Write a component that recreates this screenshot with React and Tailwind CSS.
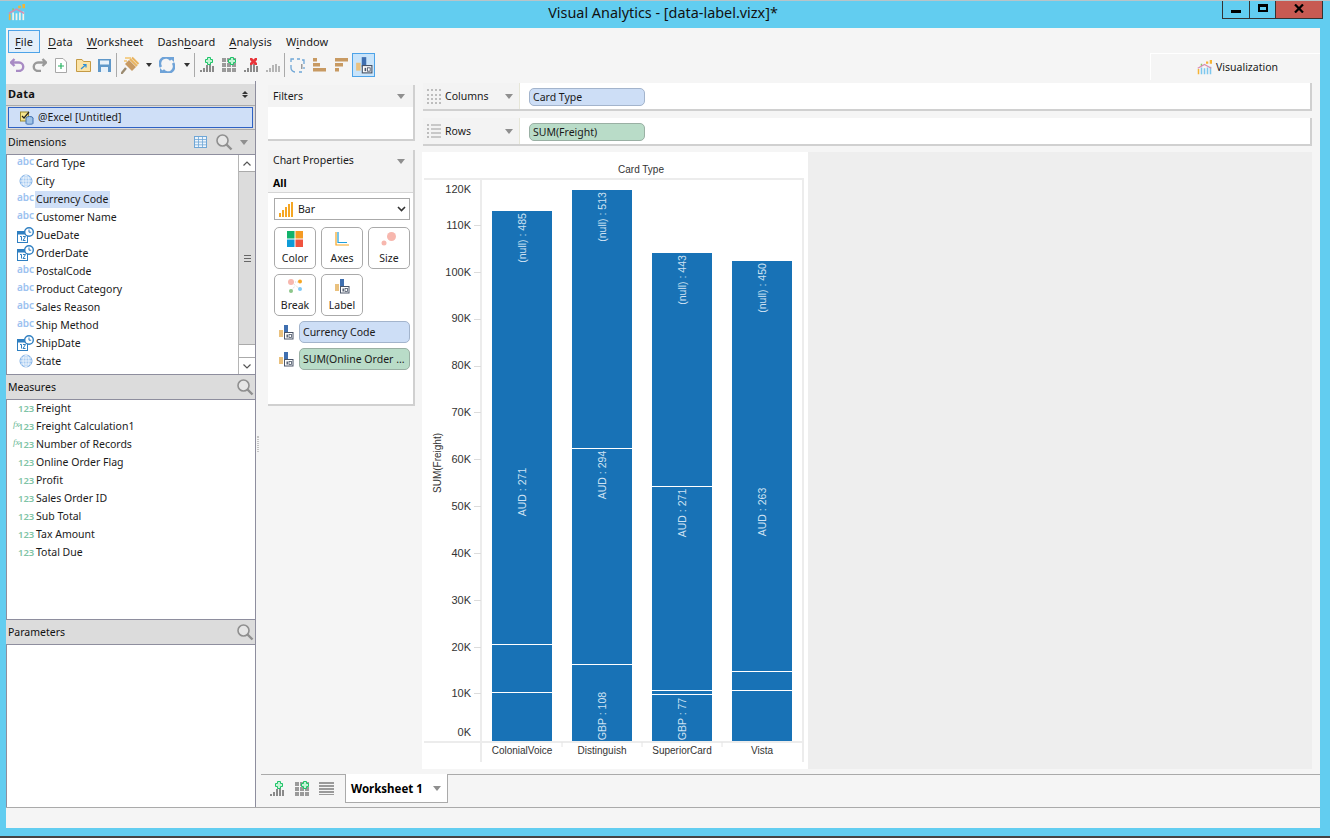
import React from "react";

const UI = "font-['Noto_Sans',sans-serif]";

const DIMENSIONS = [
  { name: "Card Type", type: "abc" },
  { name: "City", type: "geo" },
  { name: "Currency Code", type: "abc", selected: true },
  { name: "Customer Name", type: "abc" },
  { name: "DueDate", type: "date" },
  { name: "OrderDate", type: "date" },
  { name: "PostalCode", type: "abc" },
  { name: "Product Category", type: "abc" },
  { name: "Sales Reason", type: "abc" },
  { name: "Ship Method", type: "abc" },
  { name: "ShipDate", type: "date" },
  { name: "State", type: "geo" },
];

const MEASURES = [
  { name: "Freight" },
  { name: "Freight Calculation1", calc: true },
  { name: "Number of Records", calc: true },
  { name: "Online Order Flag" },
  { name: "Profit" },
  { name: "Sales Order ID" },
  { name: "Sub Total" },
  { name: "Tax Amount" },
  { name: "Total Due" },
];

const MENU = [
  { pre: "", key: "F", post: "ile" },
  { pre: "", key: "D", post: "ata" },
  { pre: "", key: "W", post: "orksheet" },
  { pre: "Dash", key: "b", post: "oard" },
  { pre: "", key: "A", post: "nalysis" },
  { pre: "W", key: "i", post: "ndow" },
];

const BARS = [
  { x: 492, top: 211, name: "ColonialVoice", lines: [644, 692], labels: [["(null) : 485", 238], ["AUD : 271", 492]] },
  { x: 572, top: 190, name: "Distinguish", lines: [448, 664], labels: [["(null) : 513", 217], ["AUD : 294", 475], ["GBP : 108", 716]] },
  { x: 652, top: 253, name: "SuperiorCard", lines: [486, 690, 694], labels: [["(null) : 443", 280], ["AUD : 271", 513], ["GBP : 77", 719]] },
  { x: 732, top: 261, name: "Vista", lines: [671, 690], labels: [["(null) : 450", 288], ["AUD : 263", 512]] },
];

const TICKS = [
  ["120K", 178, 193],
  ["110K", 225, 229],
  ["100K", 272, 276],
  ["90K", 319, 322],
  ["80K", 366, 369],
  ["70K", 412, 416],
  ["60K", 459, 463],
  ["50K", 506, 510],
  ["40K", 553, 557],
  ["30K", 600, 604],
  ["20K", 647, 651],
  ["10K", 693, 697],
  ["0K", 740, 736],
];

function AppLogo({ className, bar = "#7cc7ee" }) {
  return (
    <svg viewBox="0 0 20 20" className={className}>
      <rect x="1" y="12" width="2" height="7" fill="#f5b335" />
      <rect x="5" y="10" width="2" height="9" fill={bar} />
      <rect x="9" y="11" width="2" height="8" fill={bar} />
      <rect x="13" y="10" width="2" height="9" fill={bar} />
      <rect x="17" y="9" width="2" height="10" fill={bar} />
      <rect x="5" y="5" width="2" height="3" fill="#8fc66f" />
      <rect x="12" y="2" width="3" height="3" fill="#f5b335" />
      <rect x="17" y="0" width="3" height="5" fill="#f5b335" />
      <path d="M1 11 L10 6 L19 11" fill="none" stroke="#d98bb0" strokeWidth="1.6" />
    </svg>
  );
}

function Plus({ x = 7, y = 0, color = "#1fc468" }) {
  return <path d={`M${x + 2.5} ${y + 0.5} h3 v2 h2 v3 h-2 v2 h-3 v-2 h-2 v-3 h2 z`} fill="#c4f3d6" stroke={color} strokeWidth="1" />;
}

function BarsIcon({ badge, gray }) {
  const c = gray ? "#b5b5b5" : "#8a8a8a";
  return (
    <svg viewBox="0 0 16 16" className="w-4 h-4 shrink-0">
      <rect x="1" y="13" width="2" height="2" fill={c} />
      <rect x="4" y="11" width="2" height="4" fill={c} />
      <rect x="7" y="8" width="2" height="7" fill={c} />
      <rect x="10" y="7" width="2" height="8" fill={c} />
      <rect x="13" y="9" width="2" height="6" fill={c} />
      {badge === "plus" && <Plus x={6} y={0} />}
      {badge === "x" && <path d="M7 1 l2 0 l1.5 1.5 l1.5 -1.5 l2 0 l0 2 l-1.5 1.5 l1.5 1.5 l0 2 l-2 0 l-1.5 -1.5 l-1.5 1.5 l-2 0 l0 -2 l1.5 -1.5 l-1.5 -1.5 z" fill="#e8353a" />}
    </svg>
  );
}

function GridPlus() {
  return (
    <svg viewBox="0 0 16 16" className="w-4 h-4 shrink-0">
      {[1, 6, 11].map(y => [1, 6, 11].map(x => <rect key={`${x}-${y}`} x={x} y={y} width="4" height="4" fill="#9a9a9a" />))}
      <Plus x={7} y={0} />
    </svg>
  );
}

function LinesIcon() {
  return (
    <svg viewBox="0 0 15 13" className="w-[15px] h-[13px] shrink-0">
      {[0, 3, 6, 9].map(y => <rect key={y} x="0" y={y} width="15" height="2" fill="#9a9a9a" />)}
      <rect x="0" y="12" width="15" height="1" fill="#9a9a9a" />
    </svg>
  );
}

function LabelIcon({ className = "w-4 h-4" }) {
  return (
    <svg viewBox="0 0 16 16" className={`${className} shrink-0`}>
      <rect x="1" y="6" width="4" height="7" fill="#eac17e" />
      <rect x="6" y="1" width="4" height="9" fill="#3f6fb0" />
      <rect x="6.5" y="8.5" width="8.5" height="6.5" fill="#fff" stroke="#4a5568" />
      <rect x="8.5" y="10.5" width="1.4" height="3" fill="#4a5568" />
      <rect x="11" y="10.5" width="2.5" height="3" fill="none" stroke="#4a5568" strokeWidth="0.8" />
    </svg>
  );
}

function Caret({ className = "" }) {
  return <div className={`w-0 h-0 border-x-[4px] border-x-transparent border-t-[5px] border-t-[#8f8f8f] ${className}`} />;
}

function SmallCaret() {
  return <div className="w-0 h-0 border-x-[3px] border-x-transparent border-t-[4px] border-t-[#333]" />;
}

function Search() {
  return (
    <svg viewBox="0 0 18 18" className="w-[18px] h-[18px] shrink-0">
      <circle cx="7.5" cy="7.5" r="5.5" fill="#fff" fillOpacity="0.3" stroke="#8f8f8f" strokeWidth="1.6" />
      <path d="M11.5 11.5 L16.5 16.5" stroke="#8f8f8f" strokeWidth="2.4" />
    </svg>
  );
}

function TypeIcon({ type }) {
  if (type === "abc") {
    return <span className="w-[17px] text-[10px] leading-none font-['Noto_Sans',sans-serif] font-semibold text-[#9cc2f0] -translate-y-[2px]">abc</span>;
  }
  if (type === "geo") {
    return (
      <svg viewBox="0 0 14 14" className="w-[14px] h-[14px] ml-[2px] mr-[1px]">
        <circle cx="7" cy="7" r="6" fill="#a9ccf2" stroke="#7fb0e6" />
        <path d="M1 7h12M2 4h10M2 10h10M7 1v12" stroke="#fff" strokeWidth="0.7" />
        <ellipse cx="7" cy="7" rx="3" ry="6" fill="none" stroke="#fff" strokeWidth="0.7" />
      </svg>
    );
  }
  return (
    <svg viewBox="0 0 17 16" className="w-[17px] h-4">
      <rect x="0.5" y="4.5" width="10" height="11" fill="#fff" stroke="#2f7fc1" />
      <rect x="0.5" y="4.5" width="10" height="3" fill="#2f7fc1" />
      <path d="M3 9.5h1.5v4M6 9.5h2.5l-2.5 4h2.5" fill="none" stroke="#2f7fc1" />
      <circle cx="12" cy="5" r="4.3" fill="#fff" stroke="#2f7fc1" strokeWidth="1.4" />
      <path d="M12 2.5v2.7h2.2" fill="none" stroke="#2f7fc1" />
    </svg>
  );
}

function PanelHeader({ title, children }) {
  return (
    <div className="h-[24px] bg-[#dcdcdc] flex items-center pl-[2px] pr-[1px] text-[#111]">
      <span className="flex-1">{title}</span>
      {children}
    </div>
  );
}

function Scrollbar() {
  return (
    <div className="w-[17px] shrink-0 border-l border-[#b5b5b5] flex flex-col bg-white">
      <div className="h-[17px] border-b border-[#aaa] flex items-center justify-center">
        <svg viewBox="0 0 8 5" className="w-2 h-[5px]"><path d="M0.5 4.5 L4 1 L7.5 4.5" fill="none" stroke="#555" strokeWidth="1.2" /></svg>
      </div>
      <div className="h-[173px] bg-[#dcdcdc] border-b border-[#aaa] flex items-center justify-center">
        <div className="w-[7px] h-[7px] border-y-[1px] border-[#666] flex items-center"><div className="w-full h-px bg-[#666]" /></div>
      </div>
      <div className="flex-1" />
      <div className="h-[17px] border-t border-[#aaa] flex items-center justify-center">
        <svg viewBox="0 0 8 5" className="w-2 h-[5px]"><path d="M0.5 0.5 L4 4 L7.5 0.5" fill="none" stroke="#555" strokeWidth="1.2" /></svg>
      </div>
    </div>
  );
}

function Sidebar() {
  return (
    <div className="w-[250px] shrink-0 flex flex-col border-r border-[#8e8e9e]">
      <div className="h-[21px] mt-[3px] bg-[#dcdcdc] flex items-center pl-[2px] pr-[4px] font-bold text-[#111]">
        <span className="flex-1 text-[11px] tracking-[0.3px] -translate-y-[1px]">Data</span>
        <div className="flex flex-col gap-[1px] mr-[3px]">
          <div className="w-0 h-0 border-x-[3px] border-x-transparent border-b-[3px] border-b-[#333]" />
          <div className="w-0 h-0 border-x-[3px] border-x-transparent border-t-[3px] border-t-[#333]" />
        </div>
      </div>
      <div className="h-[25px] bg-[#dcdcdc] border-y border-[#aaa] p-[1px]">
        <div className="h-full ml-[1px] mr-px bg-[#cfdff7] border border-[#2f62c4] flex items-center pl-[11px] gap-[4px]">
          <svg viewBox="0 0 14 14" className="w-[14px] h-[14px]">
            <rect x="0.5" y="1" width="8" height="9" fill="#f5e58e" stroke="#9c8a2e" />
            <path d="M2 5l2 2l5-6" fill="none" stroke="#222" strokeWidth="1.2" />
            <ellipse cx="9.5" cy="7" rx="3.5" ry="1.5" fill="#9fc2e6" stroke="#3f6fb0" />
            <path d="M6 7v5.5c0 1 7 1 7 0V7" fill="#9fc2e6" stroke="#3f6fb0" />
          </svg>
          <span>@Excel [Untitled]</span>
        </div>
      </div>
      <PanelHeader title="Dimensions">
        <svg viewBox="0 0 13 12" className="w-[13px] h-[12px] mr-[8px]">
          <rect x="0.5" y="0.5" width="12" height="11" fill="#eef5fc" stroke="#6fa6d6" />
          <path d="M0.5 3.5h12M0.5 6h12M0.5 8.8h12M4.5 0.5v11M8.5 0.5v11" stroke="#6fa6d6" strokeWidth="0.8" />
        </svg>
        <Search />
        <Caret className="ml-[7px] mr-[6px]" />
      </PanelHeader>
      <div className="h-[221px] bg-white border-y border-l border-[#8e8e9e] flex">
        <div className="flex-1">
          {DIMENSIONS.map(d => (
            <div key={d.name} className="h-[18px] flex items-center pl-[10px]">
              <div className="w-[18px] flex items-center -translate-y-[1px]"><TypeIcon type={d.type} /></div>
              <span className={`px-[1px] leading-[17px] -translate-y-[1px] ${d.selected ? "bg-[#cfdff7]" : ""}`}>{d.name}</span>
            </div>
          ))}
        </div>
        <Scrollbar />
      </div>
      <PanelHeader title="Measures"><Search /></PanelHeader>
      <div className="h-[221px] bg-white border-y border-l border-[#8e8e9e]">
        {MEASURES.map(m => (
          <div key={m.name} className="h-[18px] flex items-center pl-[6px]">
            <span className="w-[5px] text-[9px] leading-none italic text-[#6ab795] font-['Liberation_Serif',serif] -translate-y-[3px]">{m.calc ? "fx" : ""}</span>
            <span className="w-[18px] text-[9.5px] leading-none font-semibold text-[#7fc4a6]">123</span>
            <span className="-translate-y-[1px]">{m.name}</span>
          </div>
        ))}
      </div>
      <PanelHeader title="Parameters"><Search /></PanelHeader>
      <div className="flex-1 bg-white border-t border-l border-[#8e8e9e]" />
    </div>
  );
}

function PropButton({ label, icon }) {
  return (
    <div className="h-[42px] border border-[#aaa] rounded-[5px] bg-white flex flex-col items-center pt-[3px] text-[#222]">
      <div className="h-[16px] flex items-center justify-center">{icon}</div>
      <span className="leading-[15px] mt-[4px]">{label}</span>
    </div>
  );
}

function MiddlePanel() {
  return (
    <div className="w-[147px] shrink-0 flex flex-col">
      <div className="h-[56px] mt-[4px] bg-white border-b-2 border-r-2 border-[#d0d0d0]">
        <div className="h-[22px] bg-[#f3f3f3] flex items-center pl-[5px] pr-[8px]">
          <span className="flex-1">Filters</span>
          <Caret />
        </div>
      </div>
      <div className="h-[256px] mt-[9px] bg-white border-b-2 border-r-2 border-[#d0d0d0]">
        <div className="h-[22px] bg-[#f3f3f3] flex items-center pl-[5px] pr-[8px]">
          <span className="flex-1 -translate-y-[1px]">Chart Properties</span>
          <Caret />
        </div>
        <div className="h-[21px] bg-[#f3f3f3] border-b border-[#d5d5d5] flex items-center pl-[5px] font-bold text-black">
          <span className="translate-y-[1px]">All</span>
        </div>
        <div className="pl-[6px] pr-[3px] pt-[5px]">
          <div className="h-[22px] border border-[#aaa] flex items-center pl-[4px] pr-[3px] gap-[4px]">
            <svg viewBox="0 0 15 15" className="w-[15px] h-[15px]">
              {[[0, 11, 4], [3, 8, 7], [6, 5, 10], [9, 2, 13], [12, 0, 15]].map(([x, y, h]) => (
                <rect key={x} x={x} y={y} width="2" height={h} fill="#f5a623" />
              ))}
            </svg>
            <span className="flex-1">Bar</span>
            <svg viewBox="0 0 9 6" className="w-[9px] h-[6px]"><path d="M1 1 L4.5 4.5 L8 1" fill="none" stroke="#333" strokeWidth="1.6" /></svg>
          </div>
          <div className="grid grid-cols-3 gap-[5px] mt-[7px]">
            <PropButton
              label="Color"
              icon={
                <svg viewBox="0 0 16 16" className="w-4 h-4">
                  <rect width="7.5" height="7.5" fill="#12b26b" />
                  <rect x="8.5" width="7.5" height="7.5" fill="#f59a23" />
                  <rect y="8.5" width="7.5" height="7.5" fill="#0f9bd7" />
                  <rect x="8.5" y="8.5" width="7.5" height="7.5" fill="#f0533f" />
                </svg>
              }
            />
            <PropButton
              label="Axes"
              icon={
                <svg viewBox="0 0 14 14" className="w-[14px] h-[14px]">
                  <path d="M1 0v13h13" fill="none" stroke="#f5a623" strokeWidth="1.2" />
                  <path d="M3 0v10.5h9" fill="none" stroke="#1f9fdc" strokeWidth="1.2" />
                </svg>
              }
            />
            <PropButton
              label="Size"
              icon={
                <svg viewBox="0 0 16 16" className="w-4 h-4">
                  <circle cx="10.5" cy="5.5" r="4.5" fill="#f7b7ae" />
                  <circle cx="3" cy="12" r="2.5" fill="#f7b7ae" />
                </svg>
              }
            />
            <PropButton
              label="Break"
              icon={
                <svg viewBox="0 0 16 16" className="w-4 h-4">
                  <path d="M4 4L13 4M4 4L13 11M4 13L8 8" stroke="#bbb" strokeWidth="0.6" strokeDasharray="1 1" />
                  <circle cx="4" cy="4" r="3" fill="#f7b7ae" />
                  <circle cx="13" cy="3.5" r="2" fill="#f5a623" />
                  <circle cx="4" cy="13" r="2" fill="#8cc68a" />
                  <circle cx="13" cy="11" r="2" fill="#7fc9f5" />
                </svg>
              }
            />
            <PropButton label="Label" icon={<LabelIcon />} />
          </div>
          <div className="flex items-center mt-[5px] pl-[4px]">
            <LabelIcon />
            <div className="ml-[5px] flex-1 h-[22px] rounded-[5px] bg-[#cddef6] border border-[#a3b4cc] flex items-center pl-[3px]">
              <span>Currency Code</span>
            </div>
          </div>
          <div className="flex items-center mt-[5px] pl-[4px]">
            <LabelIcon />
            <div className="ml-[5px] flex-1 h-[22px] rounded-[5px] bg-[#b9dcc8] border border-[#9ab0a4] flex items-center pl-[3px] whitespace-nowrap">
              <span>SUM(Online Order ...</span>
            </div>
          </div>
        </div>
      </div>
    </div>
  );
}

function Shelf({ title, icon, pill, pillClass, className }) {
  return (
    <div className={`bg-white border-b-2 border-r-2 border-[#d0d0d0] flex ${className}`}>
      <div className="w-[97px] bg-[#f3f3f3] border-r border-[#e6e6d8] flex items-center pl-[3px] pr-[6px]">
        <div className="w-[16px] flex justify-center">{icon}</div>
        <span className="flex-1 pl-[3px]">{title}</span>
        <Caret />
      </div>
      <div className="pl-[9px] pt-[2px] flex items-center">
        <div className={`w-[116px] h-[18px] rounded-[5px] border flex items-center pl-[3px] ${pillClass}`}>
          <span>{pill}</span>
        </div>
      </div>
    </div>
  );
}

function Chart() {
  const sx = x => x - 422;
  const sy = y => y - 152;
  return (
    <svg viewBox="0 0 386 617" className="w-[386px] h-[617px] bg-white shrink-0 font-['Liberation_Sans',sans-serif]">
      <text x={sx(641)} y={sy(173)} fontSize="10" textAnchor="middle" fill="#333">Card Type</text>
      <path d={`M${sx(424)} ${sy(179)}H${sx(804)}M${sx(424)} ${sy(742)}H${sx(804)}M${sx(481)} ${sy(179)}V${sy(762)}M${sx(803)} ${sy(179)}V${sy(762)}`} fill="none" stroke="#ececec" strokeWidth="2" />
      {[562, 642, 722].map(x => <path key={x} d={`M${sx(x)} ${sy(742)}V${sy(747)}`} stroke="#e4e4e4" />)}
      {TICKS.map(([label, tick, ty]) => (
        <g key={label}>
          {label !== "120K" && label !== "0K" && <rect x={sx(474)} y={sy(tick)} width="7" height="1" fill="#dcdcdc" />}
          <text x={sx(471)} y={sy(ty)} fontSize="11" textAnchor="end" fill="#333">{label}</text>
        </g>
      ))}
      <text transform={`translate(${sx(441)} ${sy(463)}) rotate(-90)`} fontSize="10" textAnchor="middle" fill="#333">SUM(Freight)</text>
      {BARS.map(b => (
        <g key={b.name}>
          <rect x={sx(b.x)} y={sy(b.top)} width="60" height={741 - b.top} fill="#1872b6" />
          {b.lines.map(y => <rect key={y} x={sx(b.x)} y={sy(y)} width="60" height="1" fill="#fff" />)}
          {b.labels.map(([text, y]) => (
            <text key={text} transform={`translate(${sx(b.x + 34)} ${sy(y)}) rotate(-90)`} fontSize="10.5" textAnchor="middle" fill="#cfe2f3">{text}</text>
          ))}
          <text x={sx(b.x + 30)} y={sy(754)} fontSize="10" textAnchor="middle" fill="#333">{b.name}</text>
        </g>
      ))}
    </svg>
  );
}

function Toolbar() {
  return (
    <div className="h-[26px] -mt-[1px] flex items-center pl-[4px]">
      <svg viewBox="0 0 15 14" className="w-[15px] h-[14px]"><path d="M4.5 1L1 4.5L4.5 8M1.5 4.5H9a4.2 4.2 0 0 1 0 8.5H6" fill="none" stroke="#a88bc4" strokeWidth="2.4" /></svg>
      <svg viewBox="0 0 15 14" className="w-[15px] h-[14px] ml-[7px]"><path d="M10.5 1L14 4.5L10.5 8M13.5 4.5H6a4.2 4.2 0 0 0 0 8.5H9" fill="none" stroke="#9a9a9a" strokeWidth="2.4" /></svg>
      <svg viewBox="0 0 12 15" className="w-[12px] h-[15px] ml-[8px]">
        <path d="M0.5 0.5H8L11.5 4V14.5H0.5Z" fill="#fff" stroke="#a8a8a8" />
        <path d="M6 5v6M3 8h6" stroke="#28b463" strokeWidth="1.2" />
      </svg>
      <svg viewBox="0 0 15 13" className="w-[15px] h-[13px] ml-[9px]">
        <path d="M0.5 12.5V0.5H6L7.5 2.5H14.5V12.5Z" fill="#fbe3a6" stroke="#c49a45" />
        <path d="M5 10L10 5.5M7 5.5H10V8.5" fill="none" stroke="#2f8fd6" strokeWidth="1.2" />
      </svg>
      <svg viewBox="0 0 13 13" className="w-[13px] h-[13px] ml-[7px]">
        <rect width="13" height="13" fill="#5f98c9" />
        <rect x="2" y="1.5" width="9" height="4" fill="#e8f1f9" />
        <rect x="3" y="8" width="7" height="5" fill="#e8f1f9" />
      </svg>
      <div className="w-px h-[24px] bg-[#aaa] ml-[5px]" />
      <svg viewBox="0 0 19 18" className="w-[19px] h-[18px] ml-[4px]">
        <path d="M0 18L5 12" stroke="#9a8a70" strokeWidth="2.4" />
        <path d="M4 8L11 15L15 11L8 4Z" fill="#c89a62" />
        <path d="M9 3L16 10M11 1.5L17.5 8" stroke="#e8b35f" strokeWidth="2" />
        <path d="M4 2h6M3 5h3" stroke="#f2c26b" strokeWidth="1.5" />
      </svg>
      <div className="ml-[6px]"><SmallCaret /></div>
      <svg viewBox="0 0 16 16" className="w-4 h-4 ml-[7px]">
        <path d="M2 10A6 6 0 0 1 12 3" fill="none" stroke="#6fa3d8" strokeWidth="2.6" />
        <path d="M14 6A6 6 0 0 1 4 13" fill="none" stroke="#6fa3d8" strokeWidth="2.6" />
        <path d="M10 0h5v5zM6 16H1v-5z" fill="#6fa3d8" />
      </svg>
      <div className="ml-[9px]"><SmallCaret /></div>
      <div className="w-px h-[24px] bg-[#aaa] ml-[4px]" />
      <div className="ml-[4px]"><BarsIcon badge="plus" /></div>
      <div className="ml-[6px]"><GridPlus /></div>
      <div className="ml-[6px]"><BarsIcon badge="x" /></div>
      <div className="ml-[6px]"><BarsIcon gray /></div>
      <div className="w-px h-[24px] bg-[#aaa] ml-[3px]" />
      <svg viewBox="0 0 15 15" className="w-[15px] h-[15px] ml-[5px]">
        <path d="M1 4V1H4M7 1h3M12 2h2V6M14 9v2M12 14H9M1 7v3C1 12 3 14 5 14" fill="none" stroke="#6fa6d6" strokeWidth="1.3" />
        <path d="M11 6h1.5v5H11z" fill="#9a9a9a" />
      </svg>
      <svg viewBox="0 0 13 14" className="w-[13px] h-[14px] ml-[8px]">
        <rect x="0" y="0" width="4" height="3.5" fill="#c89a62" />
        <rect x="0" y="5" width="7" height="3.5" fill="#c89a62" />
        <rect x="0" y="10" width="13" height="3.5" fill="#c89a62" />
      </svg>
      <svg viewBox="0 0 13 14" className="w-[13px] h-[14px] ml-[9px]">
        <rect x="0" y="0" width="13" height="3.5" fill="#c89a62" />
        <rect x="0" y="5" width="8" height="3.5" fill="#c89a62" />
        <rect x="0" y="10" width="4" height="3.5" fill="#c89a62" />
      </svg>
      <div className="ml-[4px] w-[23px] h-[24px] bg-[#c9e4fa] border border-[#4da3e8] flex items-center justify-center">
        <LabelIcon className="w-[18px] h-[18px]" />
      </div>
    </div>
  );
}

export default function App() {
  return (
    <div className={`w-[1330px] h-[838px] overflow-hidden bg-[#62cdf0] border-t border-[#b9c4c8] flex flex-col text-[10.5px] leading-none text-[#1a1a1a] ${UI}`}>
      {/* title bar */}
      <div className="h-[27px] shrink-0 flex items-start relative">
        <AppLogo className="w-[17px] h-[17px] ml-[8px] mt-[3px]" bar="#f4f1e4" />
        <div className="absolute left-0 right-0 top-[3px] text-center text-[14.4px] leading-[18px] text-[#111] pr-[4px]">Visual Analytics - [data-label.vizx]*</div>
        <div className="absolute top-0 left-[1222px] h-[18px] flex border border-t-0 border-[#333]">
          <div className="w-[27px] border-r border-[#333] flex items-center justify-center"><div className="w-[10px] h-[3px] bg-black mt-[3px]" /></div>
          <div className="w-[26px] border-r border-[#333] flex items-center justify-center"><div className="w-[10px] h-[8px] border-2 border-t-[3px] border-black -mt-[3px]" /></div>
          <div className="w-[46px] bg-[#c75a52] flex items-center justify-center">
            <svg viewBox="0 0 10 9" className="w-[10px] h-[9px] -mt-[3px]"><path d="M1 0.5L9 8.5M9 0.5L1 8.5" stroke="#000" strokeWidth="2.2" /></svg>
          </div>
        </div>
      </div>

      <div className="mx-[6px] w-[1314px] h-[800px] shrink-0 bg-[#f5f5f5] flex flex-col">
        {/* menu + toolbar */}
        <div className="h-[53px] shrink-0 relative">
          <div className="h-[25px] pt-[2px] flex items-center pl-[2px] text-[11px]">
            {MENU.map((m, i) => (
              <div key={m.post} className={`h-[23px] flex items-center tracking-[0.1px] ${i === 0 ? "w-[32px] justify-center bg-[#e3effa] border border-[#4da3e8] mr-px" : "px-[7px]"}`}>
                {m.pre}<span className="underline underline-offset-2">{m.key}</span>{m.post}
              </div>
            ))}
          </div>
          <Toolbar />
          <div className="absolute top-[25px] right-0 w-[170px] h-[27px] border-t border-l border-white flex items-center pl-[46px] gap-[4px]">
            <AppLogo className="w-[15px] h-[15px]" />
            <span>Visualization</span>
          </div>
        </div>

        {/* main area */}
        <div className="h-[726px] shrink-0 flex">
          <Sidebar />
          <div className="w-[12px] shrink-0 flex items-center justify-center">
            <div className="w-[2px] h-[16px] -ml-[8px] border-x border-dotted border-[#c4c4c4]" />
          </div>
          <MiddlePanel />
          <div className="ml-[7px] flex-1 flex flex-col pr-[8px]">
            <Shelf
              className="h-[28px] mt-[2px] ml-[1px]"
              title="Columns"
              pill="Card Type"
              pillClass="bg-[#cddef6] border-[#a3b4cc]"
              icon={
                <div className="w-[14px] h-[15px] grid grid-cols-4 gap-[2px]">
                  {[0, 1, 2, 3].map(i => <div key={i} className="border-l-2 border-dotted border-[#bdbdbd]" />)}
                </div>
              }
            />
            <Shelf
              className="h-[28px] mt-[7px] ml-[1px]"
              title="Rows"
              pill="SUM(Freight)"
              pillClass="bg-[#b9dcc8] border-[#9ab0a4]"
              icon={
                <div className="w-[14px] h-[14px] flex gap-[2px]">
                  <div className="w-[2px] border-l-2 border-dotted border-[#bdbdbd]" />
                  <div className="flex-1 flex flex-col justify-between">
                    {[0, 1, 2, 3].map(i => <div key={i} className="h-[2px] bg-[#c8c8c8]" />)}
                  </div>
                </div>
              }
            />
            <div className="h-[617px] mt-[6px] flex bg-[#eeeeee]">
              <Chart />
            </div>
          </div>
        </div>

        {/* worksheet tabs */}
        <div className="h-[33px] shrink-0 ml-[255px] flex items-start -mt-[33px] relative">
          <div className="w-[84px] h-[28px] border-t border-[#aaa] flex items-center pl-[8px] gap-[9px]">
            <BarsIcon badge="plus" />
            <GridPlus />
            <LinesIcon />
          </div>
          <div className="w-[103px] h-[29px] bg-white border border-t-0 border-[#aaa] flex items-center pl-[5px] pr-[6px] font-bold text-[11.5px] text-black">
            <span className="flex-1 translate-y-[1px]">Worksheet 1</span>
            <Caret />
          </div>
          <div className="flex-1 border-t border-[#aaa]" />
        </div>

        {/* status bar */}
        <div className="flex-1 border-t border-[#aaa]" />
      </div>
      <div className="mt-auto h-[2px] bg-[#444]" />
    </div>
  );
}
